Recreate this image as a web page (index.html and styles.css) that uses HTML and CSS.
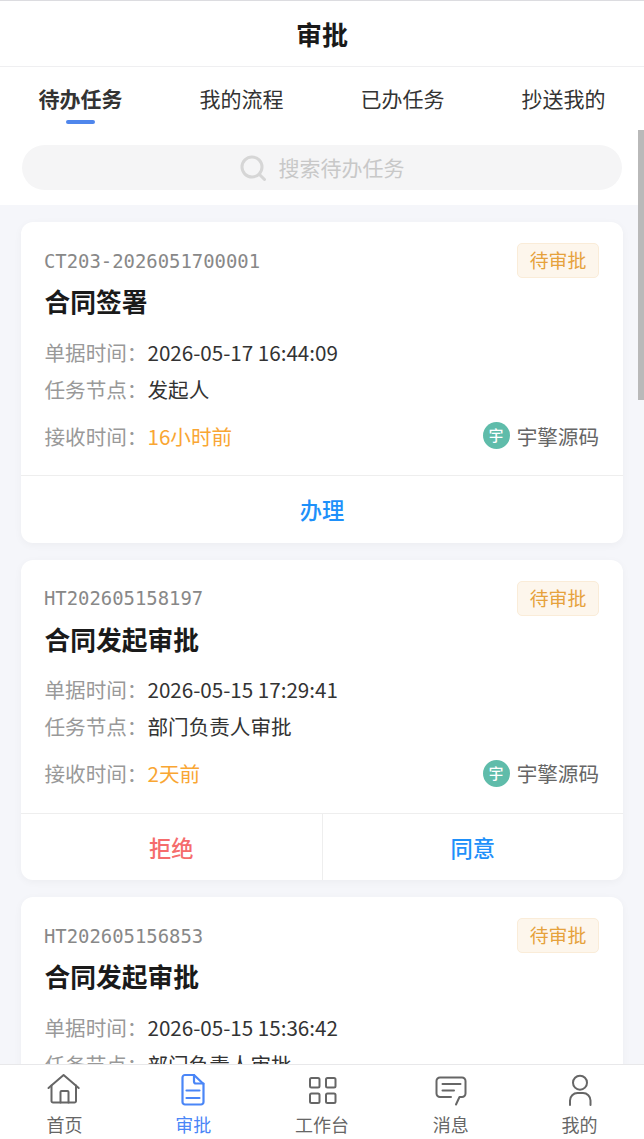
FILE: index.html
```html
<!DOCTYPE html>
<html lang="zh-CN">
<head>
  <meta charset="UTF-8" />
  <meta name="viewport" content="width=device-width, initial-scale=1.0" />
  <title>审批</title>
  <link rel="stylesheet" href="styles.css">
</head>
<body>
  <div class="page">
    <header class="navbar">审批</header>

    <div class="tabs">
      <div class="tab active">待办任务</div>
      <div class="tab">我的流程</div>
      <div class="tab">已办任务</div>
      <div class="tab">抄送我的</div>
    </div>

    <div class="search-wrap">
      <div class="search">
        <svg class="search-icon" viewBox="0 0 26 26" fill="none" stroke="#d6d6d6" stroke-width="3" stroke-linecap="round">
          <circle cx="12" cy="12" r="10"/>
          <path d="M19.5 19.5L24.5 24.5"/>
        </svg>
        <span>搜索待办任务</span>
      </div>
    </div>

    <main class="list">
      <section class="card">
        <div class="card-body">
          <div class="card-head">
            <span class="code">CT203-2026051700001</span>
            <span class="badge">待审批</span>
          </div>
          <h2 class="title">合同签署</h2>
          <div class="row"><span class="label">单据时间：</span><span class="value">2026-05-17 16:44:09</span></div>
          <div class="row"><span class="label">任务节点：</span><span class="value">发起人</span></div>
          <div class="row row-last">
            <span class="label">接收时间：</span><span class="time">16小时前</span>
            <span class="owner"><span class="avatar">宇</span>宇擎源码</span>
          </div>
        </div>
        <div class="actions">
          <div class="action primary">办理</div>
        </div>
      </section>

      <section class="card">
        <div class="card-body">
          <div class="card-head">
            <span class="code">HT202605158197</span>
            <span class="badge">待审批</span>
          </div>
          <h2 class="title">合同发起审批</h2>
          <div class="row"><span class="label">单据时间：</span><span class="value">2026-05-15 17:29:41</span></div>
          <div class="row"><span class="label">任务节点：</span><span class="value">部门负责人审批</span></div>
          <div class="row row-last">
            <span class="label">接收时间：</span><span class="time">2天前</span>
            <span class="owner"><span class="avatar">宇</span>宇擎源码</span>
          </div>
        </div>
        <div class="actions">
          <div class="action danger">拒绝</div>
          <div class="action primary">同意</div>
        </div>
      </section>

      <section class="card">
        <div class="card-body">
          <div class="card-head">
            <span class="code">HT202605156853</span>
            <span class="badge">待审批</span>
          </div>
          <h2 class="title">合同发起审批</h2>
          <div class="row"><span class="label">单据时间：</span><span class="value">2026-05-15 15:36:42</span></div>
          <div class="row"><span class="label">任务节点：</span><span class="value">部门负责人审批</span></div>
        </div>
      </section>
    </main>

    <nav class="tabbar">
      <div class="tabbar-item">
        <svg class="tabbar-icon" viewBox="0 0 36 34" fill="none" stroke="#666" stroke-width="2" stroke-linejoin="round" stroke-linecap="round">
          <path d="M2.500 15L17.600 2L32.700 15"/>
          <path d="M5.500 12.500V28a1.500 1.500 0 0 0 1.500 1.500H28.500a1.500 1.500 0 0 0 1.500-1.500V12.500"/>
          <path d="M14.500 29.500V19a1 1 0 0 1 1-1h6a1 1 0 0 1 1 1V29.500"/>
        </svg>
        <span>首页</span>
      </div>
      <div class="tabbar-item active">
        <svg class="tabbar-icon" viewBox="0 0 36 34" fill="none" stroke="#4a86f7" stroke-width="2.2" stroke-linejoin="round" stroke-linecap="round">
          <path d="M10 2H19L28.500 11V29a2.500 2.500 0 0 1-2.500 2.500H10A2.500 2.500 0 0 1 7.500 29V4.500A2.500 2.500 0 0 1 10 2Z"/>
          <path d="M19 2V8.500A2 2 0 0 0 21 10.500H28.500"/>
          <path d="M11.500 17.500H24.500M11.500 25H24.500"/>
        </svg>
        <span>审批</span>
      </div>
      <div class="tabbar-item">
        <svg class="tabbar-icon" viewBox="0 0 36 34" fill="none" stroke="#666" stroke-width="2" stroke-linejoin="round">
          <rect x="6" y="5" width="9.500" height="9.500" rx="1.500"/>
          <rect x="22" y="5" width="9.500" height="9.500" rx="1.500"/>
          <rect x="6" y="20.500" width="9.500" height="9.500" rx="1.500"/>
          <rect x="22" y="20.500" width="9.500" height="9.500" rx="1.500"/>
        </svg>
        <span>工作台</span>
      </div>
      <div class="tabbar-item">
        <svg class="tabbar-icon" viewBox="0 0 36 34" fill="none" stroke="#666" stroke-width="2" stroke-linejoin="round" stroke-linecap="round">
          <path d="M18 24H7A3.500 3.500 0 0 1 3.500 20.500V8A3.500 3.500 0 0 1 7 4.500H29A3.500 3.500 0 0 1 32.500 8V20.500A3.500 3.500 0 0 1 29 24H26.500L23 31.500"/>
          <path d="M9.500 11H27.500M9.500 17.500H21"/>
        </svg>
        <span>消息</span>
      </div>
      <div class="tabbar-item">
        <svg class="tabbar-icon" viewBox="0 0 36 34" fill="none" stroke="#666" stroke-width="2" stroke-linecap="round">
          <circle cx="18" cy="9.700" r="7"/>
          <path d="M8 32V27.500a7.500 7.500 0 0 1 7.500-7.500h5.500a7.500 7.500 0 0 1 7.500 7.500V32"/>
        </svg>
        <span>我的</span>
      </div>
    </nav>

    <div class="scrollbar"></div>
  </div>
</body>
</html>
```

FILE: styles.css
```css
* {
  box-sizing: border-box;
}
html, body {
  margin: 0;
  height: 100%;
  overflow: hidden;
}
body {
  font-family: "Noto Sans CJK SC", "Noto Sans", sans-serif;
  background: #f5f6fa;
  color: #333;
}
.page {
  position: relative;
  height: 100vh;
  display: flex;
  flex-direction: column;
}
.navbar {
  flex: none;
  height: 67px;
  line-height: 66px;
  border-top: 1px solid #dcdce0;
  border-bottom: 1px solid #efeff1;
  background: #fff;
  text-align: center;
  font-size: 26px;
  font-weight: bold;
  color: #1a1a1a;
}
.tabs {
  flex: none;
  display: grid;
  grid-template-columns: repeat(4, 161px);
  height: 63px;
  background: #fff;
}
.tab {
  position: relative;
  text-align: center;
  font-size: 21px;
  line-height: 62px;
  color: #333;
}
.tab.active {
  font-weight: bold;
}
.tab.active::after {
  content: "";
  position: absolute;
  left: 66px;
  bottom: 6px;
  width: 29px;
  height: 4px;
  border-radius: 2px;
  background: #4f86ec;
}
.search-wrap {
  flex: none;
  background: #fff;
  padding: 15px 22px;
  height: 75px;
}
.search {
  height: 45px;
  border-radius: 23px;
  background: #f5f5f6;
  display: flex;
  align-items: center;
  justify-content: center;
  gap: 13px;
  font-size: 21px;
  color: #c8c8c8;
}
.search span {
  margin-bottom: 2px;
}
.search-icon {
  width: 26px;
  height: 26px;
}
.list {
  flex: 1;
  min-height: 0;
  overflow: hidden;
  padding: 17px 21px 0;
  display: flex;
  flex-direction: column;
  gap: 17px;
}
.card {
  flex: none;
  background: #fff;
  border-radius: 12px;
  box-shadow: 0 2px 8px rgba(0, 0, 0, 0.04);
}
.card-body {
  padding: 21px 24px 19px 23.5px;
}
.card-head {
  display: flex;
  justify-content: space-between;
  align-items: center;
  height: 35px;
}
.code {
  margin-left: -0.5px;
  font-family: "DejaVu Sans Mono", monospace;
  font-size: 18.9px;
  color: #888;
}
.badge {
  width: 82px;
  height: 35px;
  line-height: 32px;
  text-align: center;
  font-size: 18.9px;
  color: #e6a23c;
  background: #fdf6ec;
  border: 1px solid #faecd8;
  border-radius: 5px;
}
.title {
  margin: 7px 0 18px;
  font-size: 25.76px;
  line-height: 32px;
  font-weight: bold;
  color: #1a1a1a;
}
.row {
  display: flex;
  align-items: center;
  height: 37px;
  padding-bottom: 4px;
  font-size: 20.6px;
}
.row-last {
  margin-top: 10px;
}
.label {
  color: #999;
}
.value {
  color: #333;
}
.time {
  color: #f9a633;
}
.owner {
  margin-left: auto;
  display: flex;
  align-items: center;
  gap: 7px;
  color: #666;
}
.avatar {
  width: 27px;
  height: 27px;
  border-radius: 50%;
  background: #5fbcaa;
  color: #fff;
  font-size: 14.6px;
  font-weight: 500;
  line-height: 26px;
  text-align: center;
}
.actions {
  display: flex;
  height: 67.5px;
  border-top: 1px solid #eee;
}
.action {
  flex: 1;
  text-align: center;
  font-size: 22.3px;
  line-height: 66px;
  font-weight: 500;
}
.action + .action {
  border-left: 1px solid #eee;
}
.primary {
  color: #1e90fa;
}
.danger {
  color: #f56c6c;
}
.tabbar {
  flex: none;
  height: 75px;
  display: grid;
  grid-template-columns: repeat(5, 1fr);
  background: #fff;
  border-top: 1px solid #e8e8ea;
}
.tabbar-item {
  display: flex;
  flex-direction: column;
  align-items: center;
  font-size: 18px;
  line-height: 26px;
  color: #666;
  padding-top: 8px;
}
.tabbar-item.active {
  color: #4a86f7;
}
.tabbar-icon {
  width: 36px;
  height: 34px;
  margin-bottom: 4px;
}
.scrollbar {
  position: absolute;
  top: 130px;
  right: 0;
  width: 6px;
  height: 270px;
  background: #b9b9b9;
}
```
